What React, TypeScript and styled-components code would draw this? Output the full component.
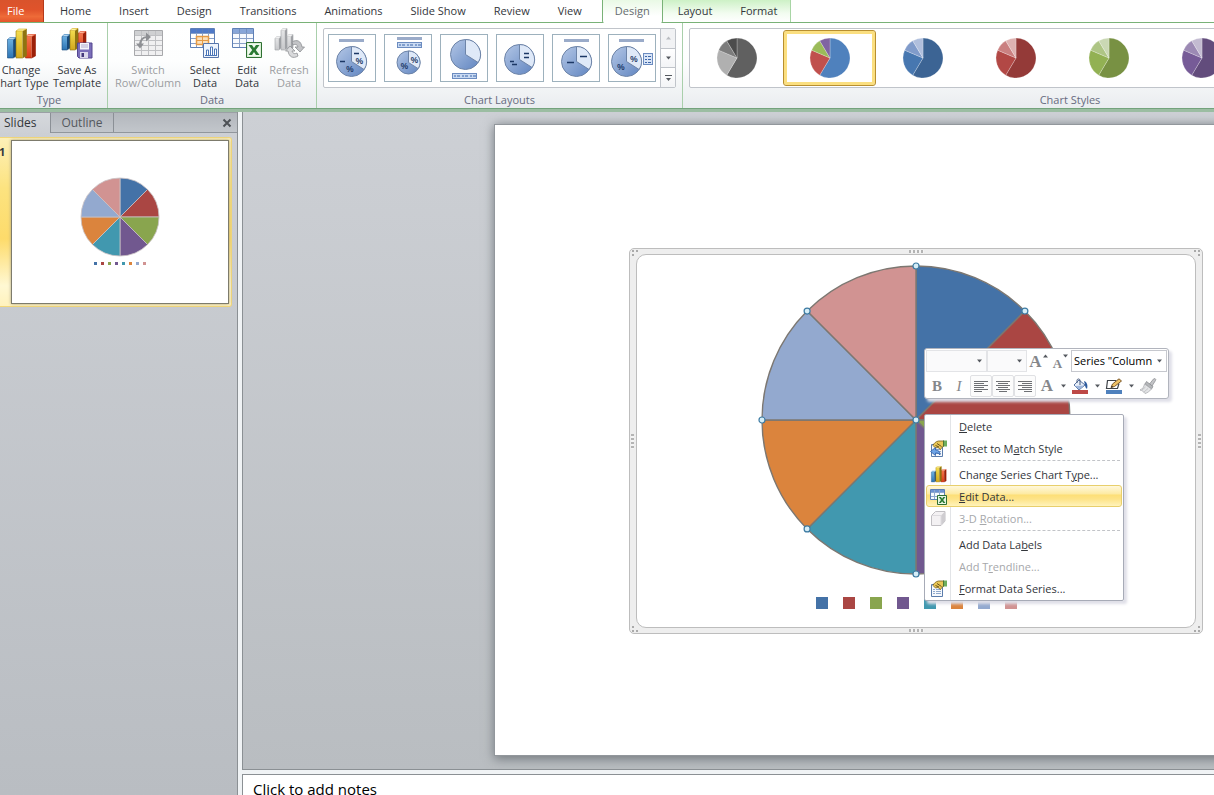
import React from "react";
import styled, { createGlobalStyle, css } from "styled-components";

const GlobalStyle = createGlobalStyle`
  * { box-sizing: border-box; }
  body {
    margin: 0;
    overflow: hidden;
    font-family: "Open Sans", "Noto Sans", sans-serif;
    font-size: 11px;
    line-height: 13px;
    color: #33363b;
    background: #ffffff;
  }
  button, select, textarea {
    margin: 0;
    padding: 0;
    border: 0;
    border-radius: 0;
    background: none;
    font: inherit;
    color: inherit;
  }
  svg { display: block; flex: none; }
`;

const SERIES = ["#4472a7", "#aa4643", "#89a54e", "#71588f", "#4198af", "#db843d", "#93a9cf", "#d19392"];

/* ---------- window ---------- */

const Window = styled.div`
  display: flex;
  flex-direction: column;
  height: 100vh;
  overflow: hidden;
`;

/* ---------- tab strip ---------- */

const TabStrip = styled.nav`
  display: flex;
  flex: none;
  height: 23px;
  border-bottom: 1px solid #79b277;
  background: #ffffff;
`;

const FileTab = styled.button`
  width: 44px;
  height: 22px;
  padding: 0 0 2px 7px;
  text-align: left;
  color: #ffffff;
  border-right: 1px solid #b5391a;
  background: linear-gradient(#d9532c, #e0532b 45%, #ee6b38 75%, #e4552b);
`;

const TabList = styled.div`
  display: flex;
  padding: 0 6px 0 2px;
`;

const Tab = styled.button`
  height: 22px;
  padding: 0 14px 2px;
  white-space: nowrap;
`;

const ContextTabs = styled.div`
  display: flex;
  border-right: 1px solid #a8d5a5;
  background: linear-gradient(#cdf1c6, #f2fcf0 60%, #ffffff);
`;

const ContextTab = styled(Tab)<{ $active?: boolean }>`
  padding: 0 13px 2px 15px;
  ${(p) =>
    p.$active &&
    css`
      height: 23px;
      padding: 0 12px 3px;
      color: #666b70;
      border: solid #79b277;
      border-width: 0 1px;
      border-radius: 0 0 2px 2px;
      background: linear-gradient(#e9f9e5, #ffffff 70%);
    `}
`;

/* ---------- ribbon ---------- */

const Ribbon = styled.div`
  display: flex;
  flex: none;
  height: 89px;
  border-bottom: 3px solid #9bbda2;
  background: linear-gradient(#ffffff, #fdfefe 45%, #e9ecef);
  box-shadow: inset 0 -1px #73a37c;
  overflow: hidden;
`;

const Group = styled.section<{ $pad: number; $grow?: boolean; $bleed?: boolean }>`
  display: flex;
  flex: ${(p) => (p.$grow ? "1 0 auto" : "none")};
  flex-direction: column;
  height: 85px;
  padding: 5px ${(p) => p.$pad}px 0;
  margin-left: ${(p) => (p.$bleed ? "-9px" : "0")};
  border-right: 1px solid #a9cfab;
`;

const GroupBody = styled.div`
  display: flex;
  flex: none;
  height: 60px;
`;

const GroupLabel = styled.h2`
  margin: 0;
  padding-top: 5px;
  font-size: 11px;
  font-weight: 400;
  line-height: 14px;
  text-align: center;
  color: #676b80;
`;

const BigButton = styled.button<{ $w: number }>`
  display: flex;
  flex-direction: column;
  align-items: center;
  width: ${(p) => p.$w}px;
  text-align: center;
  white-space: nowrap;
  &:disabled { color: #9b9da1; }
  svg { margin-bottom: 3px; }
`;

const ButtonLabel = styled.span`
  display: flex;
  flex-direction: column;
  align-items: center;
`;

const Gallery = styled.div`
  display: flex;
  height: 60px;
  border: 1px solid #c0c4ca;
  border-radius: 2px;
  background: #ffffff;
`;

const LayoutRow = styled.div`
  display: flex;
  gap: 8px;
  padding: 5px 4px;
`;

const LayoutButton = styled.button`
  width: 48px;
  height: 48px;
  border: 1px solid #9db1bd;
`;

const Scroller = styled.div`
  display: flex;
  flex-direction: column;
  width: 15px;
  border-left: 1px solid #c0c4ca;
`;

const ScrollButton = styled.button`
  display: flex;
  flex: 1;
  align-items: center;
  justify-content: center;
  background: linear-gradient(#ffffff, #f3f4f6);
  & + & { border-top: 1px solid #c0c4ca; }
  &:disabled { background: #f1f2f4; }
`;

const StyleGallery = styled(Gallery)`
  width: 762px;
  padding-top: 1px;
`;

const StyleButton = styled.button<{ $selected?: boolean }>`
  display: flex;
  flex: none;
  align-items: center;
  justify-content: center;
  width: 93px;
  height: 56px;
  ${(p) =>
    p.$selected &&
    css`
      border: 1px solid #b88f30;
      border-radius: 3px;
      box-shadow: inset 0 0 0 3px #fbdf80;
    `}
`;

/* ---------- workspace ---------- */

const Workspace = styled.div`
  display: flex;
  flex: 1;
  min-height: 0;
  background: #f0f3f5;
`;

const SlidePane = styled.aside`
  display: flex;
  flex: none;
  flex-direction: column;
  width: 238px;
  border-right: 1px solid #8b9094;
  background: linear-gradient(#cdd0d5, #b9bdc2);
`;

const PaneHeader = styled.div`
  display: flex;
  height: 21px;
  border-top: 1px solid #9ba0a5;
  border-bottom: 1px solid #91969c;
  background: linear-gradient(#b3b7bd, #c2c6cb);
`;

const PaneTab = styled.button<{ $active?: boolean }>`
  width: 63px;
  padding-bottom: 1px;
  font-size: 12px;
  color: #54585d;
  border-right: 1px solid #8b9096;
  ${(p) =>
    p.$active &&
    css`
      width: 51px;
      height: 20px;
      padding: 0 0 2px 4px;
      text-align: left;
      color: #33363b;
      background: linear-gradient(#d5d8dc, #cdd0d5);
    `}
`;

const CloseButton = styled.button`
  display: flex;
  align-items: center;
  justify-content: center;
  width: 20px;
  margin-left: auto;
`;

const ThumbRow = styled.button`
  display: flex;
  align-items: flex-start;
  width: 232px;
  margin-top: 4px;
  padding: 2px 2px 2px 0;
  text-align: left;
  border: 1px solid #f2d77a;
  border-left: 0;
  border-radius: 0 3px 3px 0;
  background: linear-gradient(#fdf0b8, #fce37f 30%, #fddb6b 60%, #fff8d3 88%, #fff2bd);
`;

const ThumbNumber = styled.span`
  width: 11px;
  padding-top: 5px;
  font-weight: 700;
  text-indent: -1px;
`;

const Thumb = styled.span`
  display: flex;
  flex: 1;
  flex-direction: column;
  align-items: center;
  gap: 5px;
  height: 164px;
  padding-top: 36px;
  border: 1px solid #7d7b6c;
  background: #ffffff;
  box-shadow: 0 0 3px #a8a184;
`;

const Legend = styled.span<{ $size: number; $gap: number }>`
  display: flex;
  gap: ${(p) => p.$gap}px;
  height: ${(p) => p.$size}px;
`;

const Swatch = styled.span<{ $color: string }>`
  height: 100%;
  aspect-ratio: 1;
  background: ${(p) => p.$color};
`;

const MainPane = styled.main`
  display: flex;
  flex: 1;
  flex-direction: column;
  gap: 4px;
  min-width: 0;
  margin-left: 4px;
`;

const Stage = styled.div`
  flex: 1;
  min-height: 0;
  padding: 13px 0 14px 252px;
  border: solid #8b9094;
  border-width: 0 0 1px 1px;
  background: linear-gradient(#cdd0d5, #b9bdc1);
  overflow: hidden;
`;

const Slide = styled.div`
  position: relative;
  height: 100%;
  aspect-ratio: 4 / 3;
  background: #ffffff;
  box-shadow: 0 0 0 1px #92979c, 1px 2px 10px 2px #747a7f;
`;

const Notes = styled.textarea`
  flex: none;
  height: 21px;
  padding: 4px 10px 0;
  font-size: 15px;
  line-height: 20px;
  color: #000000;
  border: solid #8b9094;
  border-width: 1px 0 0 1px;
  background: #ffffff;
  resize: none;
  overflow: hidden;
  outline: 0;
`;

/* ---------- chart object ---------- */

const ChartFrame = styled.div`
  position: absolute;
  left: 134px;
  top: 123px;
  padding: 5px 6px;
  border: 1px solid #bdbdbd;
  border-radius: 5px;
  background: #eeeeee;
`;

const ChartArea = styled.div`
  display: flex;
  flex-direction: column;
  align-items: center;
  gap: 19px;
  width: 560px;
  height: 374px;
  padding-top: 7px;
  border: 1px solid #bdbdbd;
  border-radius: 10px;
  background: #ffffff;
`;

const Grip = styled.span<{ $side: "top" | "bottom" | "left" | "right" }>`
  position: absolute;
  ${(p) =>
    p.$side === "top" || p.$side === "bottom"
      ? css`
          ${p.$side}: 1px;
          left: calc(50% - 7px);
          width: 15px;
          height: 3px;
          background: repeating-linear-gradient(90deg, #b4b4b4 0 2px, #f4f4f4 2px 4px);
        `
      : css`
          ${p.$side}: 1px;
          top: calc(50% - 7px);
          width: 3px;
          height: 15px;
          background: repeating-linear-gradient(#b4b4b4 0 2px, #f4f4f4 2px 4px);
        `}
`;

const CornerGrip = styled.span<{ $v: "top" | "bottom"; $h: "left" | "right" }>`
  position: absolute;
  ${(p) => p.$v}: 1px;
  ${(p) => p.$h}: 2px;
  width: 2px;
  height: 2px;
  background: #aaaaaa;
  box-shadow: ${(p) => (p.$h === "left" ? 4 : -4)}px 0 #aaaaaa, 0 ${(p) => (p.$v === "top" ? 4 : -4)}px #aaaaaa;
`;

/* ---------- mini toolbar ---------- */

const MiniToolbar = styled.div`
  position: absolute;
  left: 429px;
  top: 223px;
  display: flex;
  flex-direction: column;
  gap: 3px;
  width: 245px;
  height: 51px;
  padding: 1px;
  border: 1px solid #b1b4bd;
  border-radius: 3px;
  background: #ffffff;
  box-shadow: 3px 3px 3px #dfdfe8;
`;

const ToolRow = styled.div`
  display: flex;
  align-items: center;
  height: 22px;
`;

const SelectBox = styled.label<{ $w: number; $filled?: boolean }>`
  display: flex;
  align-items: center;
  width: ${(p) => p.$w}px;
  height: 22px;
  margin-left: ${(p) => (p.$filled ? "auto" : "0")};
  padding-right: 3px;
  border: 1px solid ${(p) => (p.$filled ? "#c6c8ce" : "#e3e4e7")};
  background: ${(p) => (p.$filled ? "#ffffff" : "#fafafb")};
`;

const Select = styled.select`
  flex: 1;
  min-width: 0;
  height: 20px;
  padding: 0 0 2px 2px;
  appearance: none;
  color: #000000;
  outline: 0;
`;

const Tool = styled.button<{ $w: number; $boxed?: boolean }>`
  display: flex;
  align-items: center;
  justify-content: center;
  width: ${(p) => p.$w}px;
  height: 22px;
  font-family: "Liberation Serif", serif;
  font-size: 15px;
  font-weight: 700;
  line-height: 16px;
  color: #85878b;
  ${(p) =>
    p.$boxed &&
    css`
      border: 1px solid #e0e1e4;
      border-radius: 2px;
      background: #fcfcfc;
    `}
`;

const SizeTool = styled(Tool)`
  align-items: flex-start;
  padding-top: 4px;
`;

const Italic = styled.i`
  font-weight: 400;
`;

const SmallLetter = styled.span`
  font-size: 13px;
  line-height: 20px;
`;

const BigLetter = styled.span`
  font-size: 17px;
`;

/* ---------- context menu ---------- */

const Menu = styled.div`
  position: absolute;
  left: 429px;
  top: 289px;
  width: 200px;
  padding-bottom: 1px;
  border: 1px solid #a7abb7;
  border-radius: 2px;
  background: linear-gradient(90deg, #ffffff 25px, #e2e4e7 25px 26px, #ffffff 26px);
  box-shadow: 3px 3px 3px #dfdfe8;
`;

const MenuItem = styled.button<{ $hot?: boolean }>`
  display: flex;
  align-items: center;
  gap: 12px;
  width: 196px;
  height: 22px;
  margin: 0 1px;
  padding-left: 3px;
  text-align: left;
  white-space: nowrap;
  border: 1px solid transparent;
  border-radius: 3px;
  &:disabled { color: #a6a8ab; }
  ${(p) =>
    p.$hot &&
    css`
      border-color: #e8cf6c;
      background: linear-gradient(#fff8dc, #fdeba5 38%, #fddf78 46%, #fde387 65%, #fff3bb);
    `}
`;

const IconSlot = styled.span`
  width: 17px;
  height: 17px;
`;

const Divider = styled.hr`
  height: 3px;
  margin: 1px 3px 0 33px;
  border: 0;
  border-top: 1px dashed #c2c4c8;
`;

/* ---------- drawings ---------- */

type Slice = { value: number; color: string };

function slicePath(cx: number, cy: number, r: number, from: number, to: number) {
  const at = (t: number) => {
    const a = t * 2 * Math.PI;
    return `${(cx + r * Math.sin(a)).toFixed(2)} ${(cy - r * Math.cos(a)).toFixed(2)}`;
  };
  return `M${cx} ${cy}L${at(from)}A${r} ${r} 0 ${to - from > 0.5 ? 1 : 0} 1 ${at(to)}Z`;
}

function Slices({ data, c, r, stroke, width }: { data: Slice[]; c: number; r: number; stroke: string; width: number }) {
  const total = data.reduce((sum, d) => sum + d.value, 0);
  let start = 0;
  return (
    <g stroke={stroke} strokeWidth={width} strokeLinejoin="round">
      {data.map((d, i) => {
        const from = start;
        start += d.value / total;
        return <path key={i} d={slicePath(c, c, r, from, start)} fill={d.color} />;
      })}
    </g>
  );
}

const EIGHT = SERIES.map((color) => ({ value: 1, color }));

function SeriesPie() {
  const c = 158;
  const r = 154;
  const handles = [0, 1, 2, 3, 4, 5, 6, 7].map((i) => {
    const a = (i * Math.PI) / 4;
    return [c + r * Math.sin(a), c - r * Math.cos(a)];
  });
  return (
    <svg width="316" height="316" viewBox="0 0 316 316">
      <Slices data={EIGHT} c={c} r={r} stroke="#7c7771" width={1.4} />
      <g fill="#d5edf7" stroke="#3d7ba3" strokeWidth="1.2">
        {[...handles, [c, c]].map(([x, y], i) => (
          <circle key={i} cx={x} cy={y} r="3" />
        ))}
      </g>
    </svg>
  );
}

function StylePie({ colors }: { colors: string[] }) {
  const values = [8.2, 3.2, 1.4, 1.2];
  return (
    <svg width="42" height="42" viewBox="0 0 42 42">
      <Slices data={colors.map((color, i) => ({ value: values[i], color }))} c={21} r={20} stroke="#ffffff66" width={0.6} />
    </svg>
  );
}

function LayoutPie({ x, y, r }: { x: number; y: number; r: number }) {
  const id = `pie-${Math.round(x)}-${Math.round(y)}-${Math.round(r)}`;
  return (
    <g>
      <defs>
        <linearGradient id={id} x1="0" y1="0" x2="1" y2="1">
          <stop offset="0" stopColor="#b4c7e6" />
          <stop offset="1" stopColor="#5f84c0" />
        </linearGradient>
      </defs>
      <circle cx={x} cy={y} r={r} fill={`url(#${id})`} stroke="#6d84a8" />
      <path d={slicePath(x, y, r, 0, 0.34)} fill="#dfe9f8" stroke="#6d84a8" />
    </g>
  );
}

const Percent = ({ x, y }: { x: number; y: number }) => (
  <text x={x} y={y + 3} fontSize="9" fontWeight="600" textAnchor="middle" fill="#1c3866">
    %
  </text>
);

const TitleBar = ({ x, y }: { x: number; y: number }) => <rect x={x} y={y} width="25" height="3" fill="#9aabc9" />;

const KeyStrip = ({ x, y }: { x: number; y: number }) => (
  <g>
    <rect x={x + 0.5} y={y + 0.5} width="24" height="5" fill="#c9daf3" stroke="#6c8cc0" />
    <path d={`M${x + 2} ${y + 3}h2m1 0h3m2 0h2m1 0h3m2 0h2m1 0h3`} stroke="#3d66a8" />
  </g>
);

const Dashes = ({ d }: { d: string }) => <path d={d} stroke="#1c3866" strokeWidth="1.3" />;

const LAYOUTS: { name: string; art: React.ReactNode }[] = [
  {
    name: "Layout 1",
    art: (
      <>
        <TitleBar x={10} y={4} />
        <LayoutPie x={22.5} y={26.5} r={15} />
        <Percent x={30.5} y={25.5} />
        <Percent x={21} y={33.5} />
        <Dashes d="M25 18.500h5M11 26.500h5" />
      </>
    ),
  },
  {
    name: "Layout 2",
    art: (
      <>
        <TitleBar x={12} y={2} />
        <KeyStrip x={12} y={7} />
        <LayoutPie x={23.5} y={27.5} r={11.5} />
        <Percent x={29.5} y={25} />
        <Percent x={19.5} y={31} />
      </>
    ),
  },
  {
    name: "Layout 3",
    art: (
      <>
        <LayoutPie x={24.5} y={19.5} r={15} />
        <KeyStrip x={11} y={38} />
      </>
    ),
  },
  {
    name: "Layout 4",
    art: (
      <>
        <LayoutPie x={22.5} y={24.5} r={15} />
        <Dashes d="M27 18.500h5M27 22.500h5M13 26.500h4M15 29.500h5" />
      </>
    ),
  },
  {
    name: "Layout 5",
    art: (
      <>
        <TitleBar x={11} y={4} />
        <LayoutPie x={23.5} y={26.5} r={15} />
        <Dashes d="M27 21.500h7M14 27.500h7" />
      </>
    ),
  },
  {
    name: "Layout 6",
    art: (
      <>
        <TitleBar x={10} y={4} />
        <LayoutPie x={17.5} y={26.5} r={15} />
        <Percent x={25} y={23.5} />
        <Percent x={12} y={31.5} />
        <rect x="34.500" y="18.500" width="9" height="11" fill="#d9e5f7" stroke="#6c8cc0" />
        <path d="M36 21.500h2m1 0h3M36 24.500h2m1 0h3M36 27.500h2m1 0h3" stroke="#3d66a8" />
      </>
    ),
  },
];

type BarTone = { name: string; face: string; low: string; side: string; top: string };
const BLUE: BarTone = { name: "blue", face: "#69aee0", low: "#2c74b4", side: "#174a7c", top: "#b5d8f0" };
const YELLOW: BarTone = { name: "yellow", face: "#f3dc4e", low: "#d2a81c", side: "#8f7410", top: "#fdf6a4" };
const RED: BarTone = { name: "red", face: "#f4764c", low: "#dc3c16", side: "#9c2008", top: "#fbb193" };
const GRAY: BarTone = { name: "gray", face: "#e4e5e6", low: "#c6c7ca", side: "#a0a2a6", top: "#f2f2f3" };

function Bar({ x, y, w, b, tone }: { x: number; y: number; w: number; b: number; tone: BarTone }) {
  const f = w * 0.62;
  const d = w - f;
  const id = `bar-${tone.name}`;
  return (
    <g strokeLinejoin="round">
      <defs>
        <linearGradient id={id} x1="0" y1="0" x2="0" y2="1">
          <stop offset="0" stopColor={tone.face} />
          <stop offset="1" stopColor={tone.low} />
        </linearGradient>
      </defs>
      <path d={`M${x} ${y + 2.500}h${f}V${b}h${-f}Z`} fill={`url(#${id})`} />
      <path d={`M${x + f} ${y + 2.500}l${d} -2V${b - 2}l${-d} 2Z`} fill={tone.side} />
      <path d={`M${x} ${y + 2.500}l${d * 0.7} -2h${w - d * 0.7}l${-d} 2Z`} fill={tone.top} stroke={tone.low} strokeWidth="0.6" />
      <path d={`M${x} ${y + 2.500}V${b}h${f}l${d} -2V${y + 0.5}`} fill="none" stroke={tone.side} strokeWidth="0.6" />
    </g>
  );
}

function BarsIcon({ size = 32 }: { size?: number }) {
  return (
    <svg width={size} height={size} viewBox="0 0 32 32">
      <Bar x={2.500} y={9} w={9} b={30} tone={BLUE} />
      <Bar x={20.500} y={6} w={10} b={30} tone={RED} />
      <Bar x={11} y={0.500} w={10.500} b={30} tone={YELLOW} />
    </svg>
  );
}

function SaveTemplateIcon() {
  return (
    <svg width="32" height="32" viewBox="0 0 32 32">
      <Bar x={1} y={6} w={8} b={22} tone={BLUE} />
      <Bar x={17} y={3} w={8} b={22} tone={RED} />
      <Bar x={9} y={0} w={8} b={22} tone={YELLOW} />
      <path d="M16.500 15h14.500v15H18l-1.500-1.500Z" fill="#7a6eb9" stroke="#54478f" />
      <path d="M19 15h9v6.500h-9Z" fill="#f4f4fa" />
      <path d="M20 17h7M20 19h7" stroke="#b2accf" />
      <path d="M19 24h8v6h-8Z" fill="#dcd9ec" />
      <path d="M20.500 25h2.500v4h-2.500Z" fill="#45397c" />
    </svg>
  );
}

function TableGrid({ head, line, fill }: { head: string; line: string; fill: string }) {
  return (
    <g>
      <path d="M1.500 .500h24v19h-24Z" fill={fill} stroke={line} />
      <path d="M2 1h23v4H2Z" fill={head} />
      <path d="M2 5.500h23M2 10.500h23M2 15.500h23M7.500 1v18M13.500 1v18M19.500 1v18" stroke={line} opacity="0.75" />
    </g>
  );
}

function SwitchIcon() {
  return (
    <svg width="32" height="32" viewBox="0 0 32 32">
      <path d="M2.500 2.500h28v25h-28Z" fill="#f0f0f1" stroke="#a7a8ab" />
      <path d="M3 3h27v4H3Z" fill="#cfd0d2" />
      <path d="M3 7.500h27M3 12.500h27M3 17.500h27M3 22.500h27M9.500 3v24M16.500 3v24M23.500 3v24" stroke="#bfc0c3" />
      <path d="M8 18c0-6 3-9 7-9" fill="none" stroke="#8e9094" strokeWidth="2" />
      <path d="M14 4.500l5 4.500-5 4.500ZM4 15.500h8l-4 5Z" fill="#8e9094" />
    </svg>
  );
}

function SelectDataIcon() {
  return (
    <svg width="32" height="32" viewBox="0 0 32 32">
      <TableGrid head="#4f79c8" line="#5f80b6" fill="#ffffff" />
      <path d="M7.500 8.500h12v8h-12Z" fill="#fbe0bb" stroke="#e59a45" strokeWidth="1.500" />
      <path d="M13.500 9v7M8 12.500h11" stroke="#e59a45" />
      <path d="M14.500 15.500h15v14h-15Z" fill="#eef4fc" stroke="#5675ab" />
      <path d="M17.500 27v-5h2v5M21.500 27v-8h2v8M25.500 27v-6h2v6M16 27.500h12" fill="#ffffff" stroke="#4a75b8" />
    </svg>
  );
}

const SheetMark = () => <path d="M0 0h3.500l2 3 2-3H11L7.300 5 11 10H7.500l-2-3-2 3H0l3.700-5Z" fill="#2b7a33" />;

function EditDataIcon() {
  return (
    <svg width="32" height="32" viewBox="0 0 32 32">
      <g transform="translate(0 0)">
        <path d="M1.500 .500h21v19h-21Z" fill="#f7fafe" stroke="#5f80b6" />
        <path d="M2 1h20v4H2Z" fill="#88a6d8" />
        <path d="M2 5.500h20M2 10.500h20M2 15.500h20M8.500 1v18M15.500 1v18" stroke="#6f8cba" opacity="0.8" />
      </g>
      <path d="M15.500 14.500h15v15h-15Z" fill="#d9efd5" stroke="#2e7032" />
      <path d="M17 16h12v12H17Z" fill="#f1f9ef" />
      <g transform="translate(17.500 17)">
        <SheetMark />
      </g>
    </svg>
  );
}

const SmallEditDataIcon = () => (
  <svg width="17" height="17" viewBox="0 0 17 17">
    <path d="M.500 1.500h14v10H.500Z" fill="#f7fafe" stroke="#5f80b6" />
    <path d="M1 2h13v2H1Z" fill="#6d92d2" />
    <path d="M1 4.500h13M1 8.500h13M4.500 2v9M9.500 2v9" stroke="#8fa8d0" />
    <path d="M7.500 7.500h9v9h-9Z" fill="#e6f4e3" stroke="#2e7032" />
    <g transform="translate(8.800 9) scale(.6)">
      <SheetMark />
    </g>
  </svg>
);

function RefreshIcon() {
  return (
    <svg width="32" height="32" viewBox="0 0 32 32">
      <Bar x={2} y={8} w={6} b={22} tone={GRAY} />
      <Bar x={8} y={0} w={6} b={22} tone={GRAY} />
      <Bar x={14} y={6} w={6} b={22} tone={GRAY} />
      <path d="M19 14c5-3 9-1 10 5h2.500l-4.500 5-5-5h3c-1-3-3-3-5-2Z" fill="#c3c4c7" stroke="#8d8f93" strokeWidth="0.800" />
      <path d="M25 28c-5 3-9 1-10-5h-2.500l4.500-5 5 5h-3c1 3 3 3 5 2Z" fill="#d9dadc" stroke="#8d8f93" strokeWidth="0.800" />
    </svg>
  );
}

function FormatIcon({ reset }: { reset?: boolean }) {
  return (
    <svg width="17" height="17" viewBox="0 0 17 17">
      <path d="M1.500 4.500h11v12h-11Z" fill="#f6f9fd" stroke="#5b7cab" />
      <path d="M3 9.500h2m1 0h5M3 11.500h2m1 0h5M3 13.500h2m1 0h5" stroke="#8fa9cc" />
      <path d="M3 5.500c1-2.500 3-4 5.500-4.500H14v5c-1.500.500-2 1.500-3.500 3.500L8 7.500 5.500 8Z" fill="#e9c655" stroke="#77601c" strokeWidth="0.800" />
      <path d="M7 3.500l4.500 3M5.500 5.500l3.500 1.500" stroke="#5b4716" strokeWidth="0.900" />
      <path d="M13.500 .500H17v6h-3.500Z" fill="#6fae5d" />
      <path d="M13.500 .500v6" stroke="#3c6b2e" strokeWidth="0.800" />
      {reset && <path d="M5.500 7.500L.5 11.500l5 4v-2.500c2-.2 3.500.5 4.500 2 0-3.500-1.500-5-4.500-5Z" fill="#6ea4e6" stroke="#2a5ba4" strokeWidth="0.800" />}
    </svg>
  );
}

function CubeIcon() {
  return (
    <svg width="17" height="17" viewBox="0 0 17 17">
      <path d="M1.500 5.500l4-4h9.500V11l-4 4.500H1.500Z" fill="#f3f1f3" stroke="#c1bfc3" strokeLinejoin="round" />
      <path d="M11 15V5.500l4-4V11Z" fill="#cfcdd1" />
      <path d="M1.500 5.500H11V15" fill="none" stroke="#dddbdf" />
    </svg>
  );
}

const Arrow = ({ up, pale }: { up?: boolean; pale?: boolean }) => (
  <svg width="7" height="4" viewBox="0 0 7 4">
    <path d={up ? "M1 3.500h5L3.500.500Z" : "M1 .500h5L3.500 3.500Z"} fill={pale ? "#b9bcc1" : "#55595f"} />
  </svg>
);

const MoreArrow = () => (
  <svg width="9" height="8" viewBox="0 0 9 8">
    <path d="M1 1.500h7" stroke="#55595f" />
    <path d="M2 4h5L4.500 7Z" fill="#55595f" />
  </svg>
);

const CloseIcon = () => (
  <svg width="10" height="10" viewBox="0 0 10 10">
    <path d="M1.500 1.500l7 7M8.500 1.500l-7 7" stroke="#4d5156" strokeWidth="2" />
  </svg>
);

function AlignIcon({ align }: { align: "left" | "center" | "right" }) {
  return (
    <svg width="14" height="12" viewBox="0 0 14 12">
      {[14, 10, 14, 10, 14, 8].map((w, i) => {
        const x = align === "left" ? 0 : align === "right" ? 14 - w : (14 - w) / 2;
        return <rect key={i} x={x} y={i * 2 + 1} width={w} height="1" fill="#6e7074" />;
      })}
    </svg>
  );
}

const BucketIcon = () => (
  <svg width="18" height="16" viewBox="0 0 18 16">
    <path d="M3 7l5-5 6 5-6 5Z" fill="#e7eef8" stroke="#5773a3" />
    <path d="M6 5V2.500C6 .500 9 .500 9 2.500V7" fill="none" stroke="#43577b" />
    <path d="M4 8l4 3.500 5-4Z" fill="#9fb7dd" />
    <path d="M13 3c3 1 4 4 3 8-1-1-2-2-2-4Z" fill="#2d5c9f" />
    <path d="M1 12h16v4H1Z" fill="#bd4946" />
  </svg>
);

const PencilIcon = () => (
  <svg width="18" height="16" viewBox="0 0 18 16">
    <path d="M11 2.500H2.500l-1 8h11l1.500-5" fill="none" stroke="#3f4348" strokeWidth="1.200" />
    <path d="M6 9.500l1.500-3.500L14 .800l2.500 2.200L9.500 8.500Z" fill="#efc266" stroke="#6e4b1d" strokeWidth="0.900" />
    <path d="M6 9.500l.8-1.800 1.500 1.200Z" fill="#2b2b2b" />
    <path d="M1 12h16v4H1Z" fill="#4f81bd" />
  </svg>
);

const BrushIcon = () => (
  <svg width="18" height="16" viewBox="0 0 18 16">
    <path d="M10.500 6l4-5c1-1 3 0 2 1.500L13 8Z" fill="#c3c4c7" stroke="#909296" strokeWidth="0.800" />
    <path d="M7.500 3.500l6.500 5-1.500 2.500L6 6Z" fill="#b4b6b9" stroke="#85878b" strokeWidth="0.700" />
    <path d="M5.500 6l7 5c-2 2-4 4-6.500 4.500-1.500-2-3-3-5-3.500 2.500-1 4-3 4.500-6Z" fill="#e3e4e6" stroke="#a9abae" strokeWidth="0.800" />
    <path d="M3 12l3.500-3M5 14l4-3.500" stroke="#b4b6b9" strokeWidth="0.700" />
  </svg>
);

/* ---------- data ---------- */

const TABS = ["Home", "Insert", "Design", "Transitions", "Animations", "Slide Show", "Review", "View"];

const STYLES = [
  ["#606060", "#b0b0b0", "#7c7c7c", "#4c4c4c"],
  ["#4f81bd", "#c0504d", "#9bbb59", "#8064a2"],
  ["#3c6494", "#4777b0", "#809bca", "#b0bfdd"],
  ["#943a38", "#b24845", "#ca8080", "#deb2b1"],
  ["#789143", "#92b153", "#aec585", "#cad8b4"],
  ["#624c7c", "#765b97", "#9c8ab4", "#c3bbd1"],
  ["#368195", "#419bb3", "#7db5c8", "#b1d0dc"],
];

type Entry = { before?: string; key: string; after: string; icon?: React.ReactNode; disabled?: boolean; hot?: boolean };

const MENU: Entry[][] = [
  [
    { key: "D", after: "elete" },
    { before: "Reset to M", key: "a", after: "tch Style", icon: <FormatIcon reset /> },
  ],
  [
    { before: "Change Series Chart T", key: "y", after: "pe...", icon: <BarsIcon size={17} /> },
    { key: "E", after: "dit Data...", icon: <SmallEditDataIcon />, hot: true },
    { before: "3-D ", key: "R", after: "otation...", icon: <CubeIcon />, disabled: true },
  ],
  [
    { before: "Add Data La", key: "b", after: "els" },
    { before: "Add T", key: "r", after: "endline...", disabled: true },
    { key: "F", after: "ormat Data Series...", icon: <FormatIcon /> },
  ],
];

/* ---------- parts ---------- */

function RibbonCommand({ w, icon, lines, disabled }: { w: number; icon: React.ReactNode; lines: [string, string]; disabled?: boolean }) {
  return (
    <BigButton $w={w} disabled={disabled}>
      {icon}
      <ButtonLabel>
        <span>{lines[0]}</span>
        <span>{lines[1]}</span>
      </ButtonLabel>
    </BigButton>
  );
}

function FormattingToolbar() {
  return (
    <MiniToolbar role="toolbar" aria-label="Formatting">
      <ToolRow>
        <SelectBox $w={61}>
          <Select aria-label="Font" />
          <Arrow />
        </SelectBox>
        <SelectBox $w={40}>
          <Select aria-label="Font size" />
          <Arrow />
        </SelectBox>
        <SizeTool $w={24} aria-label="Increase font size">
          <BigLetter>A</BigLetter>
          <Arrow up />
        </SizeTool>
        <SizeTool $w={20} aria-label="Decrease font size">
          <SmallLetter>A</SmallLetter>
          <Arrow />
        </SizeTool>
        <SelectBox $w={96} $filled>
          <Select aria-label="Chart element" defaultValue="s">
            <option value="s">Series "Column</option>
          </Select>
          <Arrow />
        </SelectBox>
      </ToolRow>
      <ToolRow>
        <Tool $w={22}>B</Tool>
        <Tool $w={22}>
          <Italic>I</Italic>
        </Tool>
        <Tool $w={22} $boxed aria-label="Align left">
          <AlignIcon align="left" />
        </Tool>
        <Tool $w={22} $boxed aria-label="Center">
          <AlignIcon align="center" />
        </Tool>
        <Tool $w={22} $boxed aria-label="Align right">
          <AlignIcon align="right" />
        </Tool>
        <Tool $w={22}>
          <BigLetter>A</BigLetter>
        </Tool>
        <Tool $w={10} aria-label="Font colors">
          <Arrow />
        </Tool>
        <Tool $w={24} aria-label="Shape fill">
          <BucketIcon />
        </Tool>
        <Tool $w={10} aria-label="Fill colors">
          <Arrow />
        </Tool>
        <Tool $w={24} aria-label="Shape outline">
          <PencilIcon />
        </Tool>
        <Tool $w={10} aria-label="Outline colors">
          <Arrow />
        </Tool>
        <Tool $w={24} aria-label="Format painter">
          <BrushIcon />
        </Tool>
      </ToolRow>
    </MiniToolbar>
  );
}

function ContextMenu() {
  return (
    <Menu role="menu">
      {MENU.map((section, s) => (
        <React.Fragment key={s}>
          {s > 0 && <Divider />}
          {section.map((item) => (
            <MenuItem key={item.key + item.after} role="menuitem" disabled={item.disabled} $hot={item.hot}>
              <IconSlot>{item.icon}</IconSlot>
              <span>
                {item.before}
                <u>{item.key}</u>
                {item.after}
              </span>
            </MenuItem>
          ))}
        </React.Fragment>
      ))}
    </Menu>
  );
}

export default function App() {
  return (
    <Window>
      <GlobalStyle />
      <TabStrip>
        <FileTab>File</FileTab>
        <TabList>
          {TABS.map((name) => (
            <Tab key={name}>{name}</Tab>
          ))}
        </TabList>
        <ContextTabs>
          <ContextTab $active>Design</ContextTab>
          <ContextTab>Layout</ContextTab>
          <ContextTab>Format</ContextTab>
        </ContextTabs>
      </TabStrip>

      <Ribbon>
        <Group $pad={2} $bleed>
          <GroupBody>
            <RibbonCommand w={56} icon={<BarsIcon />} lines={["Change", "Chart Type"]} />
            <RibbonCommand w={56} icon={<SaveTemplateIcon />} lines={["Save As", "Template"]} />
          </GroupBody>
          <GroupLabel>Type</GroupLabel>
        </Group>
        <Group $pad={5}>
          <GroupBody>
            <RibbonCommand w={70} icon={<SwitchIcon />} lines={["Switch", "Row/Column"]} disabled />
            <RibbonCommand w={44} icon={<SelectDataIcon />} lines={["Select", "Data"]} />
            <RibbonCommand w={40} icon={<EditDataIcon />} lines={["Edit", "Data"]} />
            <RibbonCommand w={44} icon={<RefreshIcon />} lines={["Refresh", "Data"]} disabled />
          </GroupBody>
          <GroupLabel>Data</GroupLabel>
        </Group>
        <Group $pad={6}>
          <Gallery>
            <LayoutRow>
              {LAYOUTS.map((l) => (
                <LayoutButton key={l.name} aria-label={l.name}>
                  <svg width="46" height="46" viewBox="0 0 46 46">
                    {l.art}
                  </svg>
                </LayoutButton>
              ))}
            </LayoutRow>
            <Scroller>
              <ScrollButton aria-label="Scroll up" disabled>
                <Arrow up pale />
              </ScrollButton>
              <ScrollButton aria-label="Scroll down">
                <Arrow />
              </ScrollButton>
              <ScrollButton aria-label="More layouts">
                <MoreArrow />
              </ScrollButton>
            </Scroller>
          </Gallery>
          <GroupLabel>Chart Layouts</GroupLabel>
        </Group>
        <Group $pad={6} $grow>
          <StyleGallery>
            {STYLES.map((colors, i) => (
              <StyleButton key={i} $selected={i === 1} aria-label={`Style ${i + 1}`}>
                <StylePie colors={colors} />
              </StyleButton>
            ))}
          </StyleGallery>
          <GroupLabel>Chart Styles</GroupLabel>
        </Group>
      </Ribbon>

      <Workspace>
        <SlidePane>
          <PaneHeader>
            <PaneTab $active>Slides</PaneTab>
            <PaneTab>Outline</PaneTab>
            <CloseButton aria-label="Close pane">
              <CloseIcon />
            </CloseButton>
          </PaneHeader>
          <ThumbRow>
            <ThumbNumber>1</ThumbNumber>
            <Thumb>
              <svg width="80" height="80" viewBox="0 0 80 80">
                <Slices data={EIGHT} c={40} r={39} stroke="#c9c2c4" width={0.8} />
              </svg>
              <Legend $size={3} $gap={4}>
                {SERIES.map((c) => (
                  <Swatch key={c} $color={c} />
                ))}
              </Legend>
            </Thumb>
          </ThumbRow>
        </SlidePane>

        <MainPane>
          <Stage>
            <Slide>
              <ChartFrame>
                <Grip $side="top" />
                <Grip $side="bottom" />
                <Grip $side="left" />
                <Grip $side="right" />
                <CornerGrip $v="top" $h="left" />
                <CornerGrip $v="top" $h="right" />
                <CornerGrip $v="bottom" $h="left" />
                <CornerGrip $v="bottom" $h="right" />
                <ChartArea>
                  <SeriesPie />
                  <Legend $size={12} $gap={15}>
                    {SERIES.map((c) => (
                      <Swatch key={c} $color={c} />
                    ))}
                  </Legend>
                </ChartArea>
              </ChartFrame>
              <FormattingToolbar />
              <ContextMenu />
            </Slide>
          </Stage>
          <Notes aria-label="Notes" defaultValue="Click to add notes" />
        </MainPane>
      </Workspace>
    </Window>
  );
}
